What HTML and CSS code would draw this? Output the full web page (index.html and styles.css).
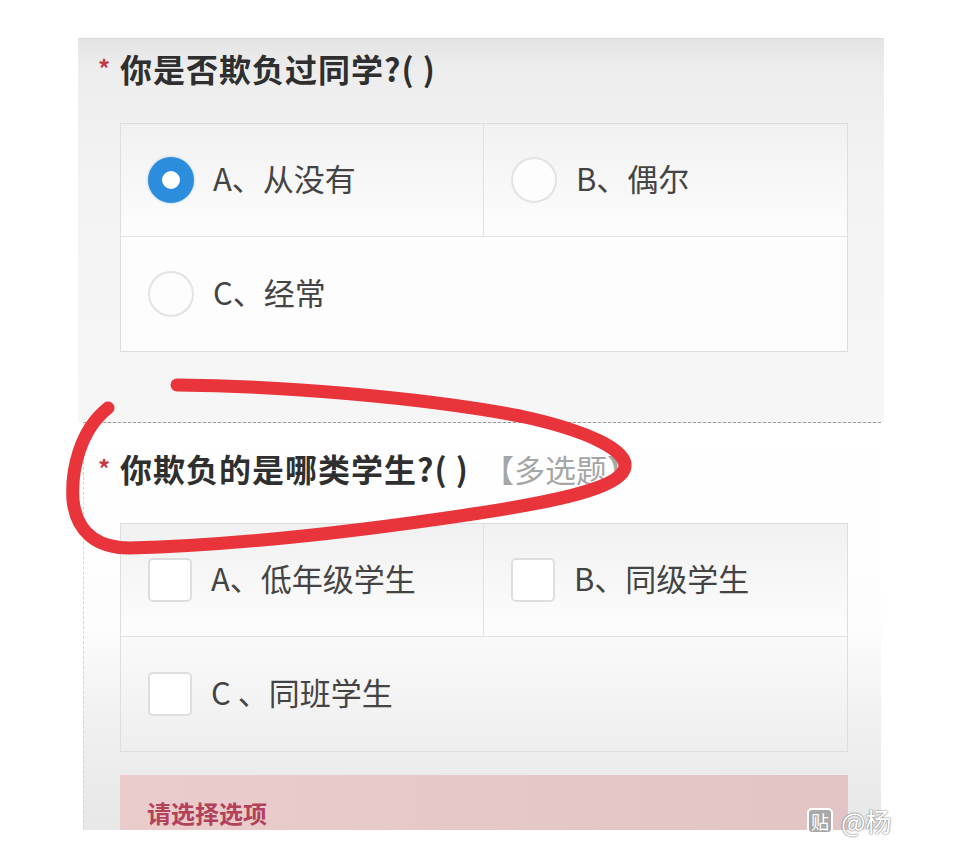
FILE: index.html
```html
<!DOCTYPE html>
<html>

<head>
    <meta charset="UTF-8">
    <title>问卷</title>
    <link rel="stylesheet" href="styles.css">
</head>

<body>
    <div class='page'>
        <div class='panel'>
            <div class='question first'>
                <div class='title'><span class='star'>*</span>你是否欺负过同学?(&nbsp;)</div>
                <div class='options'>
                    <div class='option top left'>
                        <span class='radio checked'></span>
                        <span class='label'>A、从没有</span>
                    </div>
                    <div class='option top'>
                        <span class='radio'></span>
                        <span class='label'>B、偶尔</span>
                    </div>
                    <div class='option wide'>
                        <span class='radio'></span>
                        <span class='label'>C、经常</span>
                    </div>
                </div>
            </div>
            <div class='question second'>
                <div class='title'><span class='star'>*</span>你欺负的是哪类学生?(&nbsp;)<span class='tag'>【多选题】</span></div>
                <div class='options'>
                    <div class='option top left'>
                        <span class='check'></span>
                        <span class='label'>A、低年级学生</span>
                    </div>
                    <div class='option top'>
                        <span class='check'></span>
                        <span class='label'>B、同级学生</span>
                    </div>
                    <div class='option wide fade'>
                        <span class='check'></span>
                        <span class='label'>C&nbsp;、同班学生</span>
                    </div>
                </div>
                <div class='error'>请选择选项</div>
            </div>
        </div>

        <svg class='mark' width='960' height='848' viewBox='0 0 960 848'>
            <path d='M177,385 C280,386 420,397 520,416 C590,431 632,452 624,470 C616,488 560,501 473,514 C380,528 250,545 130,548 C95,548 76,530 73,500 C71,470 80,430 108,408'
                fill='none' stroke='#e8343a' stroke-width='13' stroke-linecap='round' stroke-linejoin='round' />
        </svg>

        <div class='watermark'>
            <span class='logo'>贴</span>
            <span class='handle'>@杨</span>
        </div>
    </div>
</body>

</html>
```

FILE: styles.css
```css
html,
body {
    padding: 0;
    margin: 0;
    background: #fff;
}

.page {
    position: relative;
    width: 960px;
    height: 848px;
    overflow: hidden;
    font-family: "Noto Sans CJK SC", "Noto Sans", sans-serif;
}

.panel {
    margin-left: 78px;
    padding-top: 38px;
    width: 806px;
    height: 830px;
    box-sizing: border-box;
    overflow: hidden;
}

.question {
    padding-left: 20px;
}

.first {
    padding-top: 9px;
    padding-bottom: 70px;
    background: linear-gradient(#e4e4e4 0, #ededed 30px, #f3f3f3 140px, #f6f6f6 100%);
    border-top: 1px solid #dcdcdc;
}

.second {
    margin-left: 5px;
    margin-right: 3px;
    padding-left: 14px;
    padding-top: 25px;
    height: 420px;
    border-top: 1px dashed #9a9a9a;
    border-left: 1px dashed #d4d4d4;
    background: linear-gradient(#fff 0, #fdfdfd 200px, #f0f0f0 300px, #e4e4e4 100%);
}

.title {
    height: 40px;
    line-height: 40px;
    font-size: 32px;
    font-weight: bold;
    letter-spacing: 1px;
    color: #2f2f2f;
    white-space: nowrap;
}

.star {
    display: inline-block;
    width: 22px;
    font-size: 24px;
    line-height: 20px;
    vertical-align: top;
    margin-top: 10px;
    color: #c23a48;
}

.tag {
    margin-left: 14px;
    font-weight: normal;
    font-size: 31px;
    letter-spacing: 0;
    color: #a6a6a6;
}

.options {
    display: grid;
    grid-template-columns: 1fr 1fr;
    width: 728px;
    margin-top: 35px;
    margin-left: 22px;
    box-sizing: border-box;
    border: 1px solid #dedede;
    background: #fcfcfc;
}

.option {
    display: flex;
    align-items: center;
    gap: 19px;
    height: 113px;
    padding-left: 27px;
    box-sizing: border-box;
}

.option.top {
    border-bottom: 1px solid #e2e2e2;
    background: linear-gradient(#f1f1f1, #fdfdfd);
}

.option.left {
    border-right: 1px solid #e2e2e2;
}

.option.wide {
    grid-column: span 2;
    height: 114px;
    background: #fdfdfd;
}

.option.fade {
    background: linear-gradient(#fafafa, #eeeeee);
}

.label {
    font-size: 31px;
    line-height: 1;
    padding-bottom: 6px;
    color: #444;
    white-space: nowrap;
}

.radio {
    width: 46px;
    height: 46px;
    box-sizing: border-box;
    border-radius: 50%;
    border: 2px solid #e3e3e3;
    background: #fdfdfd;
    flex: none;
}

.radio.checked {
    border: 14px solid #2c8ddc;
    background: #fff;
    box-shadow: 0 0 3px rgba(44, 141, 220, 0.4);
}

.check {
    width: 44px;
    height: 44px;
    box-sizing: border-box;
    border: 2px solid #dedede;
    border-radius: 5px;
    background: #fff;
    flex: none;
}

.error {
    width: 728px;
    margin-top: 23px;
    margin-left: 22px;
    height: 80px;
    padding-top: 23px;
    padding-left: 27px;
    box-sizing: border-box;
    background: linear-gradient(90deg, #eacccc, #e2c4c4);
    font-size: 24px;
    line-height: 30px;
    font-weight: bold;
    color: #b3415a;
}

.mark {
    position: absolute;
    left: 0;
    top: 0;
    pointer-events: none;
}

.watermark {
    position: absolute;
    left: 807px;
    top: 806px;
    height: 30px;
    display: flex;
    align-items: center;
    gap: 8px;
}

.logo {
    width: 26px;
    height: 26px;
    box-sizing: border-box;
    border: 2px solid #fff;
    border-radius: 5px;
    background: #a9a9a9;
    color: #fff;
    font-size: 18px;
    line-height: 22px;
    text-align: center;
    flex: none;
}

.handle {
    font-size: 26px;
    line-height: 30px;
    color: #fff;
    text-shadow: 0 0 2px #777, 0 0 1px #777;
    white-space: nowrap;
}
```
